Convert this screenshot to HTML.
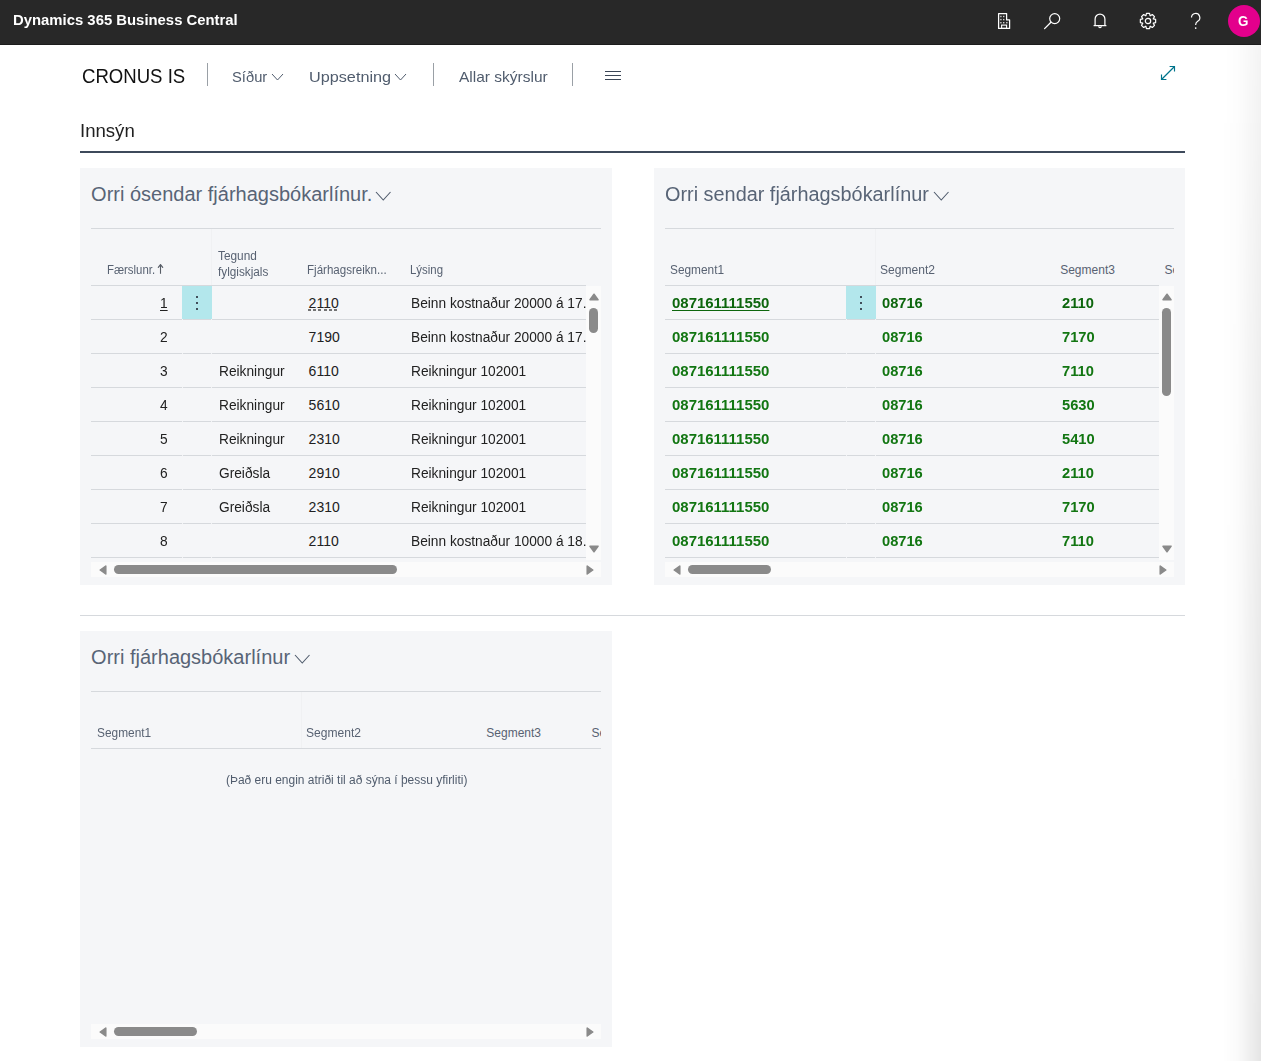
<!DOCTYPE html><html><head><meta charset="utf-8"><style>
html,body{margin:0;padding:0;}
body{width:1261px;height:1061px;position:relative;overflow:hidden;background:#fff;font-family:"Liberation Sans", sans-serif;}
.t{position:absolute;white-space:nowrap;line-height:1;transform-origin:0 0;}
.r{position:absolute;}
.clip{position:absolute;overflow:hidden;}
</style></head><body>
<div class="r" style="left:0px;top:0px;width:1261px;height:44px;background:#282828;"></div>
<div class="r" style="left:0px;top:44px;width:1261px;height:1px;background:#1c1c1c;"></div>
<div class="t" style="left:13.04px;top:11.88px;font-size:15.5px;color:#ffffff;font-weight:bold;transform:scaleX(0.9591);">Dynamics 365 Business Central</div>
<svg class="r" style="left:996px;top:11px" width="18" height="20" viewBox="0 0 18 20">
<path d="M2.6,2.6 H10.6 V8.9 H13.6 V17.4 H2.6 Z" fill="none" stroke="#fff" stroke-width="1.25" stroke-linejoin="round"/>
<rect x="5.6" y="14.1" width="5" height="3.3" fill="none" stroke="#fff" stroke-width="1.1"/>
<g fill="#d0d0d0"><rect x="4.2" y="4.8" width="1.4" height="1.4"/><rect x="7" y="4.8" width="1.4" height="1.4"/>
<rect x="4.2" y="7.9" width="1.4" height="1.4"/><rect x="7" y="7.9" width="1.4" height="1.4"/>
<rect x="4.2" y="11" width="1.4" height="1.4"/><rect x="7" y="11" width="1.4" height="1.4"/><rect x="10.1" y="11" width="1.4" height="1.4"/></g>
</svg>
<svg class="r" style="left:1041px;top:9px" width="22" height="22" viewBox="0 0 22 22">
<circle cx="13.7" cy="9.6" r="5.0" fill="none" stroke="#fff" stroke-width="1.2"/>
<line x1="9.9" y1="13.3" x2="3.6" y2="19.6" stroke="#fff" stroke-width="1.3" stroke-linecap="round"/>
</svg>
<svg class="r" style="left:1090px;top:10px" width="20" height="20" viewBox="0 0 20 20">
<path d="M5.1,15.5 V9 A4.9,4.9 0 0 1 14.9,9 V15.5" fill="none" stroke="#fff" stroke-width="1.25"/>
<line x1="3.6" y1="15.6" x2="16.4" y2="15.6" stroke="#fff" stroke-width="1.25"/>
<path d="M8.7,16.3 A1.3,1.3 0 0 0 11.3,16.3" fill="none" stroke="#fff" stroke-width="1.1"/>
</svg>
<svg class="r" style="left:1138px;top:11px" width="20" height="20" viewBox="0 0 20 20">
<polygon points="7.94,4.69 8.45,2.36 11.55,2.36 12.06,4.69 12.30,4.78 14.31,3.50 16.50,5.69 15.22,7.70 15.31,7.94 17.64,8.45 17.64,11.55 15.31,12.06 15.22,12.30 16.50,14.31 14.31,16.50 12.30,15.22 12.06,15.31 11.55,17.64 8.45,17.64 7.94,15.31 7.70,15.22 5.69,16.50 3.50,14.31 4.78,12.30 4.69,12.06 2.36,11.55 2.36,8.45 4.69,7.94 4.78,7.70 3.50,5.69 5.69,3.50 7.70,4.78" fill="none" stroke="#fff" stroke-width="1.2" stroke-linejoin="round"/>
<circle cx="10" cy="10" r="2.7" fill="none" stroke="#fff" stroke-width="1.2"/>
</svg>
<svg class="r" style="left:1186px;top:10px" width="20" height="22" viewBox="0 0 20 22">
<path d="M5.5,7.6 A4.15,4.15 0 1 1 11.7,11.2 C10.4,12.1 9.7,12.9 9.7,14.4 V14.9" fill="none" stroke="#fff" stroke-width="1.2"/>
<circle cx="9.7" cy="18.1" r="0.85" fill="#fff"/>
</svg>
<div class="r" style="left:1228px;top:5px;width:32px;height:32px;border-radius:50%;background:#e3008c;"></div>
<div class="t" style="left:1238.34px;top:14.15px;font-size:14px;color:#ffffff;font-weight:bold;transform:scaleX(0.9556);">G</div>
<div class="t" style="left:82.05px;top:66.74px;font-size:19.5px;color:#111111;font-weight:normal;transform:scaleX(0.9528);">CRONUS IS</div>
<div class="r" style="left:207px;top:63px;width:1px;height:23px;background:#9aa0a6;"></div>
<div class="t" style="left:231.62px;top:69.30px;font-size:15px;color:#505c6d;font-weight:normal;transform:scaleX(0.9829);">Síður</div>
<svg class="r" style="left:270.5px;top:73px" width="13" height="8" viewBox="-1 -1 13 8"><polyline points="0,0 5.5,6 11,0" fill="none" stroke="#505c6d" stroke-width="1.0"/></svg>
<div class="t" style="left:308.92px;top:69.30px;font-size:15px;color:#505c6d;font-weight:normal;transform:scaleX(1.0811);">Uppsetning</div>
<svg class="r" style="left:393.5px;top:73px" width="13" height="8" viewBox="-1 -1 13 8"><polyline points="0,0 5.5,6 11,0" fill="none" stroke="#505c6d" stroke-width="1.0"/></svg>
<div class="r" style="left:433px;top:63px;width:1px;height:23px;background:#9aa0a6;"></div>
<div class="t" style="left:458.50px;top:69.30px;font-size:15px;color:#505c6d;font-weight:normal;transform:scaleX(1.0337);">Allar skýrslur</div>
<div class="r" style="left:572px;top:63px;width:1px;height:23px;background:#9aa0a6;"></div>
<div class="r" style="left:605px;top:71px;width:16px;height:1px;background:#3b4656;"></div>
<div class="r" style="left:605px;top:75px;width:16px;height:1px;background:#3b4656;"></div>
<div class="r" style="left:605px;top:79px;width:16px;height:1px;background:#3b4656;"></div>
<svg class="r" style="left:1158px;top:63px" width="20" height="20" viewBox="0 0 20 20">
<g fill="none" stroke="#00748c" stroke-width="1.15" stroke-linecap="butt" stroke-linejoin="miter">
<line x1="4" y1="16" x2="16" y2="4"/>
<polyline points="11.6,3.5 16.5,3.5 16.5,8.4"/>
<polyline points="3.5,11.6 3.5,16.5 8.4,16.5"/>
</g></svg>
<div class="t" style="left:79.64px;top:121.76px;font-size:18px;color:#212121;font-weight:normal;transform:scaleX(1.0320);">Innsýn</div>
<div class="r" style="left:80px;top:151px;width:1105px;height:2px;background:#3e4a5b;"></div>
<div class="r" style="left:80px;top:168px;width:532px;height:417px;background:#f5f6f8;"></div>
<div class="t" style="left:91.10px;top:184.07px;font-size:20px;color:#586476;font-weight:normal;">Orri ósendar fjárhagsbókarlínur.</div>
<svg class="r" style="left:374.5px;top:190.5px" width="16.5" height="10" viewBox="-1 -1 16.5 10"><polyline points="0,0 7.25,8 14.5,0" fill="none" stroke="#505c6d" stroke-width="1.1"/></svg>
<div class="r" style="left:91px;top:228px;width:510px;height:1px;background:#d6d9dd;"></div>
<div class="r" style="left:211px;top:229px;width:1px;height:56px;background:#f0f1f3;"></div>
<div class="t" style="left:106.55px;top:263.84px;font-size:12px;color:#586272;font-weight:normal;transform:scaleX(0.9490);">Færslunr.</div>
<svg class="r" style="left:156px;top:262px" width="10" height="13" viewBox="0 0 10 13"><line x1="4.5" y1="2.4" x2="4.5" y2="11.8" stroke="#575d66" stroke-width="1.1"/><polyline points="2.3,5.4 4.5,2.6 6.7,5.4" fill="none" stroke="#575d66" stroke-width="1.2" stroke-linecap="round" stroke-linejoin="round"/></svg>
<div class="t" style="left:217.60px;top:249.84px;font-size:12px;color:#586272;font-weight:normal;transform:scaleX(0.9872);">Tegund</div>
<div class="t" style="left:217.90px;top:265.84px;font-size:12px;color:#586272;font-weight:normal;transform:scaleX(0.9804);">fylgiskjals</div>
<div class="t" style="left:307.04px;top:263.84px;font-size:12px;color:#586272;font-weight:normal;transform:scaleX(0.9630);">Fjárhagsreikn...</div>
<div class="t" style="left:409.55px;top:263.84px;font-size:12px;color:#586272;font-weight:normal;transform:scaleX(0.9515);">Lýsing</div>
<div class="r" style="left:91px;top:285px;width:495px;height:1px;background:#d6d9dd;"></div>
<div class="r" style="left:182px;top:286px;width:30px;height:33px;background:#b3e7ec;"></div>
<div class="r" style="left:196.3px;top:296px;width:2px;height:2px;background:#1b1b2a;border-radius:1px;"></div>
<div class="r" style="left:196.3px;top:302px;width:2px;height:2px;background:#1b1b2a;border-radius:1px;"></div>
<div class="r" style="left:196.3px;top:308px;width:2px;height:2px;background:#1b1b2a;border-radius:1px;"></div>
<div class="t" style="left:160.34px;top:296.15px;font-size:14px;color:#212121;font-weight:normal;transform:scaleX(0.9800);text-decoration:underline;text-underline-offset:1.5px;">1</div>
<div class="t" style="left:308.60px;top:296.15px;font-size:14px;color:#212121;font-weight:normal;">2110</div>
<div class="r" style="left:308px;top:309px;width:31px;height:2px;background:repeating-linear-gradient(to right,#3a3a3a 0 3px,rgba(0,0,0,0) 3px 5.2px);opacity:0.7;"></div>
<div class="clip" style="left:400px;top:286px;width:186px;height:33px;">
<div class="t" style="left:10.92px;top:10.15px;font-size:14px;color:#212121;font-weight:normal;transform:scaleX(0.9800);">Beinn kostnaður 20000 á 17.0</div>
</div>
<div class="r" style="left:91px;top:319px;width:495px;height:1px;background:#d6d9dd;"></div>
<div class="r" style="left:182px;top:319px;width:1px;height:1px;background:#f2f3f5;"></div>
<div class="r" style="left:211px;top:319px;width:1px;height:1px;background:#f2f3f5;"></div>
<div class="t" style="left:160.34px;top:330.15px;font-size:14px;color:#212121;font-weight:normal;transform:scaleX(0.9800);">2</div>
<div class="t" style="left:308.60px;top:330.15px;font-size:14px;color:#212121;font-weight:normal;">7190</div>
<div class="clip" style="left:400px;top:320px;width:186px;height:33px;">
<div class="t" style="left:10.92px;top:10.15px;font-size:14px;color:#212121;font-weight:normal;transform:scaleX(0.9800);">Beinn kostnaður 20000 á 17.0</div>
</div>
<div class="r" style="left:91px;top:353px;width:495px;height:1px;background:#d6d9dd;"></div>
<div class="r" style="left:182px;top:353px;width:1px;height:1px;background:#f2f3f5;"></div>
<div class="r" style="left:211px;top:353px;width:1px;height:1px;background:#f2f3f5;"></div>
<div class="t" style="left:160.34px;top:364.15px;font-size:14px;color:#212121;font-weight:normal;transform:scaleX(0.9800);">3</div>
<div class="t" style="left:218.92px;top:364.15px;font-size:14px;color:#212121;font-weight:normal;transform:scaleX(0.9800);">Reikningur</div>
<div class="t" style="left:308.60px;top:364.15px;font-size:14px;color:#212121;font-weight:normal;">6110</div>
<div class="clip" style="left:400px;top:354px;width:186px;height:33px;">
<div class="t" style="left:10.92px;top:10.15px;font-size:14px;color:#212121;font-weight:normal;transform:scaleX(0.9800);">Reikningur 102001</div>
</div>
<div class="r" style="left:91px;top:387px;width:495px;height:1px;background:#d6d9dd;"></div>
<div class="r" style="left:182px;top:387px;width:1px;height:1px;background:#f2f3f5;"></div>
<div class="r" style="left:211px;top:387px;width:1px;height:1px;background:#f2f3f5;"></div>
<div class="t" style="left:160.34px;top:398.15px;font-size:14px;color:#212121;font-weight:normal;transform:scaleX(0.9800);">4</div>
<div class="t" style="left:218.92px;top:398.15px;font-size:14px;color:#212121;font-weight:normal;transform:scaleX(0.9800);">Reikningur</div>
<div class="t" style="left:308.60px;top:398.15px;font-size:14px;color:#212121;font-weight:normal;">5610</div>
<div class="clip" style="left:400px;top:388px;width:186px;height:33px;">
<div class="t" style="left:10.92px;top:10.15px;font-size:14px;color:#212121;font-weight:normal;transform:scaleX(0.9800);">Reikningur 102001</div>
</div>
<div class="r" style="left:91px;top:421px;width:495px;height:1px;background:#d6d9dd;"></div>
<div class="r" style="left:182px;top:421px;width:1px;height:1px;background:#f2f3f5;"></div>
<div class="r" style="left:211px;top:421px;width:1px;height:1px;background:#f2f3f5;"></div>
<div class="t" style="left:160.34px;top:432.15px;font-size:14px;color:#212121;font-weight:normal;transform:scaleX(0.9800);">5</div>
<div class="t" style="left:218.92px;top:432.15px;font-size:14px;color:#212121;font-weight:normal;transform:scaleX(0.9800);">Reikningur</div>
<div class="t" style="left:308.60px;top:432.15px;font-size:14px;color:#212121;font-weight:normal;">2310</div>
<div class="clip" style="left:400px;top:422px;width:186px;height:33px;">
<div class="t" style="left:10.92px;top:10.15px;font-size:14px;color:#212121;font-weight:normal;transform:scaleX(0.9800);">Reikningur 102001</div>
</div>
<div class="r" style="left:91px;top:455px;width:495px;height:1px;background:#d6d9dd;"></div>
<div class="r" style="left:182px;top:455px;width:1px;height:1px;background:#f2f3f5;"></div>
<div class="r" style="left:211px;top:455px;width:1px;height:1px;background:#f2f3f5;"></div>
<div class="t" style="left:160.34px;top:466.15px;font-size:14px;color:#212121;font-weight:normal;transform:scaleX(0.9800);">6</div>
<div class="t" style="left:218.92px;top:466.15px;font-size:14px;color:#212121;font-weight:normal;transform:scaleX(0.9800);">Greiðsla</div>
<div class="t" style="left:308.60px;top:466.15px;font-size:14px;color:#212121;font-weight:normal;">2910</div>
<div class="clip" style="left:400px;top:456px;width:186px;height:33px;">
<div class="t" style="left:10.92px;top:10.15px;font-size:14px;color:#212121;font-weight:normal;transform:scaleX(0.9800);">Reikningur 102001</div>
</div>
<div class="r" style="left:91px;top:489px;width:495px;height:1px;background:#d6d9dd;"></div>
<div class="r" style="left:182px;top:489px;width:1px;height:1px;background:#f2f3f5;"></div>
<div class="r" style="left:211px;top:489px;width:1px;height:1px;background:#f2f3f5;"></div>
<div class="t" style="left:160.34px;top:500.15px;font-size:14px;color:#212121;font-weight:normal;transform:scaleX(0.9800);">7</div>
<div class="t" style="left:218.92px;top:500.15px;font-size:14px;color:#212121;font-weight:normal;transform:scaleX(0.9800);">Greiðsla</div>
<div class="t" style="left:308.60px;top:500.15px;font-size:14px;color:#212121;font-weight:normal;">2310</div>
<div class="clip" style="left:400px;top:490px;width:186px;height:33px;">
<div class="t" style="left:10.92px;top:10.15px;font-size:14px;color:#212121;font-weight:normal;transform:scaleX(0.9800);">Reikningur 102001</div>
</div>
<div class="r" style="left:91px;top:523px;width:495px;height:1px;background:#d6d9dd;"></div>
<div class="r" style="left:182px;top:523px;width:1px;height:1px;background:#f2f3f5;"></div>
<div class="r" style="left:211px;top:523px;width:1px;height:1px;background:#f2f3f5;"></div>
<div class="t" style="left:160.34px;top:534.15px;font-size:14px;color:#212121;font-weight:normal;transform:scaleX(0.9800);">8</div>
<div class="t" style="left:308.60px;top:534.15px;font-size:14px;color:#212121;font-weight:normal;">2110</div>
<div class="clip" style="left:400px;top:524px;width:186px;height:33px;">
<div class="t" style="left:10.92px;top:10.15px;font-size:14px;color:#212121;font-weight:normal;transform:scaleX(0.9800);">Beinn kostnaður 10000 á 18.0</div>
</div>
<div class="r" style="left:91px;top:557px;width:495px;height:1px;background:#d6d9dd;"></div>
<div class="r" style="left:182px;top:557px;width:1px;height:1px;background:#f2f3f5;"></div>
<div class="r" style="left:211px;top:557px;width:1px;height:1px;background:#f2f3f5;"></div>
<div class="r" style="left:586px;top:286px;width:15px;height:274px;background:#fbfbfb;"></div>
<svg class="r" style="left:589px;top:293px" width="10" height="8"><polygon points="1,6.8 5,1.2 9,6.8" fill="#8a8a8a" stroke="#8a8a8a" stroke-width="1.5" stroke-linejoin="round"/></svg>
<div class="r" style="left:589px;top:308px;width:9px;height:25px;background:#8a8a8a;border-radius:4.5px;"></div>
<svg class="r" style="left:589px;top:545px" width="10" height="8"><polygon points="1,1.2 5,6.8 9,1.2" fill="#8a8a8a" stroke="#8a8a8a" stroke-width="1.5" stroke-linejoin="round"/></svg>
<div class="r" style="left:91px;top:562px;width:510px;height:15px;background:#fbfbfb;"></div>
<svg class="r" style="left:99px;top:565px" width="8" height="10"><polygon points="6.8,1 1.2,5 6.8,9" fill="#8a8a8a" stroke="#8a8a8a" stroke-width="1.5" stroke-linejoin="round"/></svg>
<div class="r" style="left:114px;top:565px;width:283px;height:9px;background:#8a8a8a;border-radius:4.5px;"></div>
<svg class="r" style="left:586px;top:565px" width="8" height="10"><polygon points="1.2,1 6.8,5 1.2,9" fill="#8a8a8a" stroke="#8a8a8a" stroke-width="1.5" stroke-linejoin="round"/></svg>
<div class="r" style="left:654px;top:168px;width:531px;height:417px;background:#f5f6f8;"></div>
<div class="t" style="left:665.21px;top:184.07px;font-size:20px;color:#586476;font-weight:normal;transform:scaleX(0.9932);">Orri sendar fjárhagsbókarlínur</div>
<svg class="r" style="left:932.5px;top:190.5px" width="16.5" height="10" viewBox="-1 -1 16.5 10"><polyline points="0,0 7.25,8 14.5,0" fill="none" stroke="#505c6d" stroke-width="1.1"/></svg>
<div class="r" style="left:665px;top:228px;width:509px;height:1px;background:#d6d9dd;"></div>
<div class="r" style="left:875px;top:229px;width:1px;height:56px;background:#f0f1f3;"></div>
<div class="t" style="left:670.41px;top:263.84px;font-size:12px;color:#586272;font-weight:normal;transform:scaleX(0.9887);">Segment1</div>
<div class="t" style="left:880.09px;top:263.84px;font-size:12px;color:#586272;font-weight:normal;transform:scaleX(1.0057);">Segment2</div>
<div class="t" style="left:1060.20px;top:263.84px;font-size:12px;color:#586272;font-weight:normal;">Segment3</div>
<div class="clip" style="left:1160px;top:258px;width:14px;height:22px;">
<div class="t" style="left:4.40px;top:5.84px;font-size:12px;color:#586272;font-weight:normal;">Segment4</div>
</div>
<div class="r" style="left:665px;top:285px;width:494px;height:1px;background:#d6d9dd;"></div>
<div class="r" style="left:846px;top:286px;width:30px;height:33px;background:#b3e7ec;"></div>
<div class="r" style="left:860px;top:296px;width:2px;height:2px;background:#1b1b2a;border-radius:1px;"></div>
<div class="r" style="left:860px;top:302px;width:2px;height:2px;background:#1b1b2a;border-radius:1px;"></div>
<div class="r" style="left:860px;top:308px;width:2px;height:2px;background:#1b1b2a;border-radius:1px;"></div>
<div class="t" style="left:672.13px;top:296.15px;font-size:14px;color:#0d660d;font-weight:bold;transform:scaleX(1.0689);text-decoration:underline;text-underline-offset:1.5px;">087161111550</div>
<div class="t" style="left:881.95px;top:296.15px;font-size:14px;color:#0d660d;font-weight:bold;transform:scaleX(1.0474);">08716</div>
<div class="t" style="left:1061.95px;top:296.15px;font-size:14px;color:#0d660d;font-weight:bold;transform:scaleX(1.0500);">2110</div>
<div class="r" style="left:665px;top:319px;width:494px;height:1px;background:#d6d9dd;"></div>
<div class="r" style="left:846px;top:319px;width:1px;height:1px;background:#f2f3f5;"></div>
<div class="r" style="left:875px;top:319px;width:1px;height:1px;background:#f2f3f5;"></div>
<div class="t" style="left:672.13px;top:330.15px;font-size:14px;color:#127612;font-weight:bold;transform:scaleX(1.0689);">087161111550</div>
<div class="t" style="left:881.95px;top:330.15px;font-size:14px;color:#127612;font-weight:bold;transform:scaleX(1.0474);">08716</div>
<div class="t" style="left:1061.95px;top:330.15px;font-size:14px;color:#127612;font-weight:bold;transform:scaleX(1.0500);">7170</div>
<div class="r" style="left:665px;top:353px;width:494px;height:1px;background:#d6d9dd;"></div>
<div class="r" style="left:846px;top:353px;width:1px;height:1px;background:#f2f3f5;"></div>
<div class="r" style="left:875px;top:353px;width:1px;height:1px;background:#f2f3f5;"></div>
<div class="t" style="left:672.13px;top:364.15px;font-size:14px;color:#127612;font-weight:bold;transform:scaleX(1.0689);">087161111550</div>
<div class="t" style="left:881.95px;top:364.15px;font-size:14px;color:#127612;font-weight:bold;transform:scaleX(1.0474);">08716</div>
<div class="t" style="left:1061.95px;top:364.15px;font-size:14px;color:#127612;font-weight:bold;transform:scaleX(1.0500);">7110</div>
<div class="r" style="left:665px;top:387px;width:494px;height:1px;background:#d6d9dd;"></div>
<div class="r" style="left:846px;top:387px;width:1px;height:1px;background:#f2f3f5;"></div>
<div class="r" style="left:875px;top:387px;width:1px;height:1px;background:#f2f3f5;"></div>
<div class="t" style="left:672.13px;top:398.15px;font-size:14px;color:#127612;font-weight:bold;transform:scaleX(1.0689);">087161111550</div>
<div class="t" style="left:881.95px;top:398.15px;font-size:14px;color:#127612;font-weight:bold;transform:scaleX(1.0474);">08716</div>
<div class="t" style="left:1061.95px;top:398.15px;font-size:14px;color:#127612;font-weight:bold;transform:scaleX(1.0500);">5630</div>
<div class="r" style="left:665px;top:421px;width:494px;height:1px;background:#d6d9dd;"></div>
<div class="r" style="left:846px;top:421px;width:1px;height:1px;background:#f2f3f5;"></div>
<div class="r" style="left:875px;top:421px;width:1px;height:1px;background:#f2f3f5;"></div>
<div class="t" style="left:672.13px;top:432.15px;font-size:14px;color:#127612;font-weight:bold;transform:scaleX(1.0689);">087161111550</div>
<div class="t" style="left:881.95px;top:432.15px;font-size:14px;color:#127612;font-weight:bold;transform:scaleX(1.0474);">08716</div>
<div class="t" style="left:1061.95px;top:432.15px;font-size:14px;color:#127612;font-weight:bold;transform:scaleX(1.0500);">5410</div>
<div class="r" style="left:665px;top:455px;width:494px;height:1px;background:#d6d9dd;"></div>
<div class="r" style="left:846px;top:455px;width:1px;height:1px;background:#f2f3f5;"></div>
<div class="r" style="left:875px;top:455px;width:1px;height:1px;background:#f2f3f5;"></div>
<div class="t" style="left:672.13px;top:466.15px;font-size:14px;color:#127612;font-weight:bold;transform:scaleX(1.0689);">087161111550</div>
<div class="t" style="left:881.95px;top:466.15px;font-size:14px;color:#127612;font-weight:bold;transform:scaleX(1.0474);">08716</div>
<div class="t" style="left:1061.95px;top:466.15px;font-size:14px;color:#127612;font-weight:bold;transform:scaleX(1.0500);">2110</div>
<div class="r" style="left:665px;top:489px;width:494px;height:1px;background:#d6d9dd;"></div>
<div class="r" style="left:846px;top:489px;width:1px;height:1px;background:#f2f3f5;"></div>
<div class="r" style="left:875px;top:489px;width:1px;height:1px;background:#f2f3f5;"></div>
<div class="t" style="left:672.13px;top:500.15px;font-size:14px;color:#127612;font-weight:bold;transform:scaleX(1.0689);">087161111550</div>
<div class="t" style="left:881.95px;top:500.15px;font-size:14px;color:#127612;font-weight:bold;transform:scaleX(1.0474);">08716</div>
<div class="t" style="left:1061.95px;top:500.15px;font-size:14px;color:#127612;font-weight:bold;transform:scaleX(1.0500);">7170</div>
<div class="r" style="left:665px;top:523px;width:494px;height:1px;background:#d6d9dd;"></div>
<div class="r" style="left:846px;top:523px;width:1px;height:1px;background:#f2f3f5;"></div>
<div class="r" style="left:875px;top:523px;width:1px;height:1px;background:#f2f3f5;"></div>
<div class="t" style="left:672.13px;top:534.15px;font-size:14px;color:#127612;font-weight:bold;transform:scaleX(1.0689);">087161111550</div>
<div class="t" style="left:881.95px;top:534.15px;font-size:14px;color:#127612;font-weight:bold;transform:scaleX(1.0474);">08716</div>
<div class="t" style="left:1061.95px;top:534.15px;font-size:14px;color:#127612;font-weight:bold;transform:scaleX(1.0500);">7110</div>
<div class="r" style="left:665px;top:557px;width:494px;height:1px;background:#d6d9dd;"></div>
<div class="r" style="left:846px;top:557px;width:1px;height:1px;background:#f2f3f5;"></div>
<div class="r" style="left:875px;top:557px;width:1px;height:1px;background:#f2f3f5;"></div>
<div class="r" style="left:1159px;top:286px;width:15px;height:274px;background:#fbfbfb;"></div>
<svg class="r" style="left:1162px;top:293px" width="10" height="8"><polygon points="1,6.8 5,1.2 9,6.8" fill="#8a8a8a" stroke="#8a8a8a" stroke-width="1.5" stroke-linejoin="round"/></svg>
<div class="r" style="left:1162px;top:308px;width:9px;height:88px;background:#8a8a8a;border-radius:4.5px;"></div>
<svg class="r" style="left:1162px;top:545px" width="10" height="8"><polygon points="1,1.2 5,6.8 9,1.2" fill="#8a8a8a" stroke="#8a8a8a" stroke-width="1.5" stroke-linejoin="round"/></svg>
<div class="r" style="left:665px;top:562px;width:509px;height:15px;background:#fbfbfb;"></div>
<svg class="r" style="left:673px;top:565px" width="8" height="10"><polygon points="6.8,1 1.2,5 6.8,9" fill="#8a8a8a" stroke="#8a8a8a" stroke-width="1.5" stroke-linejoin="round"/></svg>
<div class="r" style="left:688px;top:565px;width:83px;height:9px;background:#8a8a8a;border-radius:4.5px;"></div>
<svg class="r" style="left:1159px;top:565px" width="8" height="10"><polygon points="1.2,1 6.8,5 1.2,9" fill="#8a8a8a" stroke="#8a8a8a" stroke-width="1.5" stroke-linejoin="round"/></svg>
<div class="r" style="left:80px;top:615px;width:1105px;height:1px;background:#d6d9dd;"></div>
<div class="r" style="left:80px;top:631px;width:532px;height:416px;background:#f5f6f8;"></div>
<div class="t" style="left:91.10px;top:647.07px;font-size:20px;color:#586476;font-weight:normal;">Orri fjárhagsbókarlínur</div>
<svg class="r" style="left:293.5px;top:653.5px" width="16.5" height="10" viewBox="-1 -1 16.5 10"><polyline points="0,0 7.25,8 14.5,0" fill="none" stroke="#505c6d" stroke-width="1.1"/></svg>
<div class="r" style="left:91px;top:691px;width:510px;height:1px;background:#d6d9dd;"></div>
<div class="r" style="left:301px;top:692px;width:1px;height:56px;background:#f0f1f3;"></div>
<div class="t" style="left:96.71px;top:726.84px;font-size:12px;color:#586272;font-weight:normal;transform:scaleX(0.9906);">Segment1</div>
<div class="t" style="left:306.29px;top:726.84px;font-size:12px;color:#586272;font-weight:normal;transform:scaleX(1.0057);">Segment2</div>
<div class="t" style="left:486.30px;top:726.84px;font-size:12px;color:#586272;font-weight:normal;">Segment3</div>
<div class="clip" style="left:587px;top:721px;width:14px;height:22px;">
<div class="t" style="left:4.40px;top:5.84px;font-size:12px;color:#586272;font-weight:normal;">Segment4</div>
</div>
<div class="r" style="left:91px;top:748px;width:510px;height:1px;background:#d6d9dd;"></div>
<div class="t" style="left:226.00px;top:773.84px;font-size:12px;color:#505c6d;font-weight:normal;transform:scaleX(0.9971);">(Það eru engin atriði til að sýna í þessu yfirliti)</div>
<div class="r" style="left:91px;top:1024px;width:510px;height:15px;background:#fbfbfb;"></div>
<svg class="r" style="left:99px;top:1027px" width="8" height="10"><polygon points="6.8,1 1.2,5 6.8,9" fill="#8a8a8a" stroke="#8a8a8a" stroke-width="1.5" stroke-linejoin="round"/></svg>
<div class="r" style="left:114px;top:1027px;width:83px;height:9px;background:#8a8a8a;border-radius:4.5px;"></div>
<svg class="r" style="left:586px;top:1027px" width="8" height="10"><polygon points="1.2,1 6.8,5 1.2,9" fill="#8a8a8a" stroke="#8a8a8a" stroke-width="1.5" stroke-linejoin="round"/></svg>
<div class="r" style="left:1222px;top:45px;width:39px;height:1016px;background:linear-gradient(to right,rgba(0,0,0,0),rgba(0,0,0,0.02) 40%,rgba(0,0,0,0.1));-webkit-mask-image:linear-gradient(to bottom,rgba(0,0,0,0.45),rgba(0,0,0,0.8) 55%,#000);mask-image:linear-gradient(to bottom,rgba(0,0,0,0.45),rgba(0,0,0,0.8) 55%,#000);"></div>
</body></html>
